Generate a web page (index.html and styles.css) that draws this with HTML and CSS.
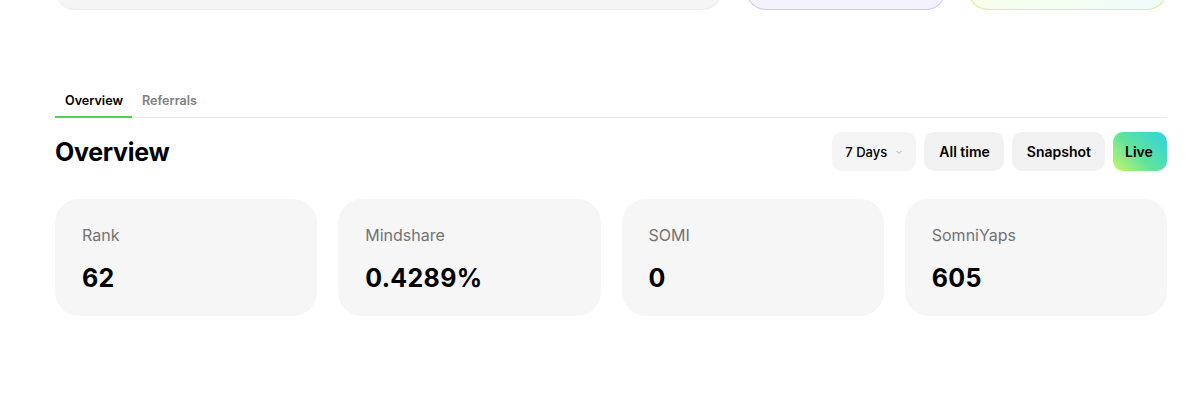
FILE: index.html
```html
<!DOCTYPE html>
<html lang="en">
<head>
<meta charset="utf-8">
<link rel="stylesheet" href="styles.css">
</head>
<body>
<div class="page">
  <div class="top-row">
    <div class="top-card main"></div>
    <div class="top-card purple"></div>
    <div class="top-card green"></div>
  </div>

  <div class="tabs">
    <div class="tab active">Overview</div>
    <div class="tab">Referrals</div>
  </div>

  <div class="header">
    <h1 class="title">Overview</h1>
    <div class="controls">
      <button class="btn select">7 Days
        <svg class="chev" width="8" height="8" viewBox="0 0 8 8"><path d="M1.5 3l2.5 2.5L6.5 3" fill="none" stroke="#b0b0b0" stroke-width="1"/></svg>
      </button>
      <button class="btn">All time</button>
      <button class="btn">Snapshot</button>
      <button class="btn live">Live</button>
    </div>
  </div>

  <div class="stats">
    <div class="stat"><div class="label">Rank</div><div class="value">62</div></div>
    <div class="stat"><div class="label">Mindshare</div><div class="value">0.4289%</div></div>
    <div class="stat"><div class="label">SOMI</div><div class="value">0</div></div>
    <div class="stat"><div class="label">SomniYaps</div><div class="value">605</div></div>
  </div>
</div>
</body>
</html>
```

FILE: styles.css
```css
* { box-sizing: border-box; }
html, body { margin: 0; padding: 0; background: #fff; }
body { font-family: Inter, "Liberation Sans", Arial, sans-serif; color: #000; }

.page {
  width: 1112px;
  margin-left: 55px;
}

.top-row {
  display: flex;
  align-items: flex-end;
  height: 40px;
  margin-top: -30px;
}
.top-card {
  height: 40px;
  border-radius: 0 0 20px 20px;
}
.top-card.main {
  width: 667px;
  background: #f5f5f5;
  border-bottom: 1px solid #ececec;
}
.top-card.purple {
  width: 200px;
  margin-left: 24px;
  background: #f3f2fd;
  border: 1px solid #cfcbef;
  border-top: none;
}
.top-card.green {
  width: 199px;
  margin-left: 22px;
  background: linear-gradient(90deg, #f7fde8, #eefcfb);
  border: 1px solid #d9f28f;
  border-top: none;
}

.tabs {
  display: flex;
  margin-top: 70px;
  border-bottom: 1px solid #e6e6e6;
  height: 38px;
}
.tab {
  font-size: 12.6px;
  font-weight: 600;
  color: #808080;
  padding: 3px 10px 0;
  line-height: 35px;
  height: 38px;
}
.tab.active {
  color: #000;
  width: 77px;
  border-bottom: 2px solid #4cd44c;
  margin-bottom: -1px;
}

.header {
  display: flex;
  justify-content: space-between;
  align-items: center;
  margin-top: 14px;
  height: 39px;
}
.title {
  margin: 0;
  font-size: 25px;
  font-weight: 700;
  letter-spacing: -0.3px;
}
.controls {
  display: flex;
  gap: 8px;
}
.btn {
  font-family: inherit;
  height: 39px;
  border: none;
  border-radius: 10px;
  background: #f2f2f2;
  font-size: 14px;
  font-weight: 600;
  color: #000;
  padding: 0 14px 0 15px;
  display: flex;
  align-items: center;
}
.btn.select {
  font-weight: 500;
  font-size: 13px;
  background: #f5f5f5;
  padding: 0 12px 0 13px;
  gap: 8px;
  width: 84px;
}
.btn.live {
  background: linear-gradient(45deg, #c8f56a 0%, #5fe49b 45%, #2fd3e0 100%);
  padding: 0 12px;
  width: 54px;
}

.stats {
  display: grid;
  grid-template-columns: repeat(4, 1fr);
  gap: 21px;
  margin-top: 28px;
}
.stat {
  background: #f6f6f6;
  border-radius: 24px;
  height: 117px;
  padding: 26px 27px 0;
}
.label {
  font-size: 16px;
  color: #737373;
  line-height: 20px;
}
.value {
  margin-top: 19px;
  font-size: 25px;
  font-weight: 700;
  line-height: 28px;
  letter-spacing: 0.3px;
}
```
